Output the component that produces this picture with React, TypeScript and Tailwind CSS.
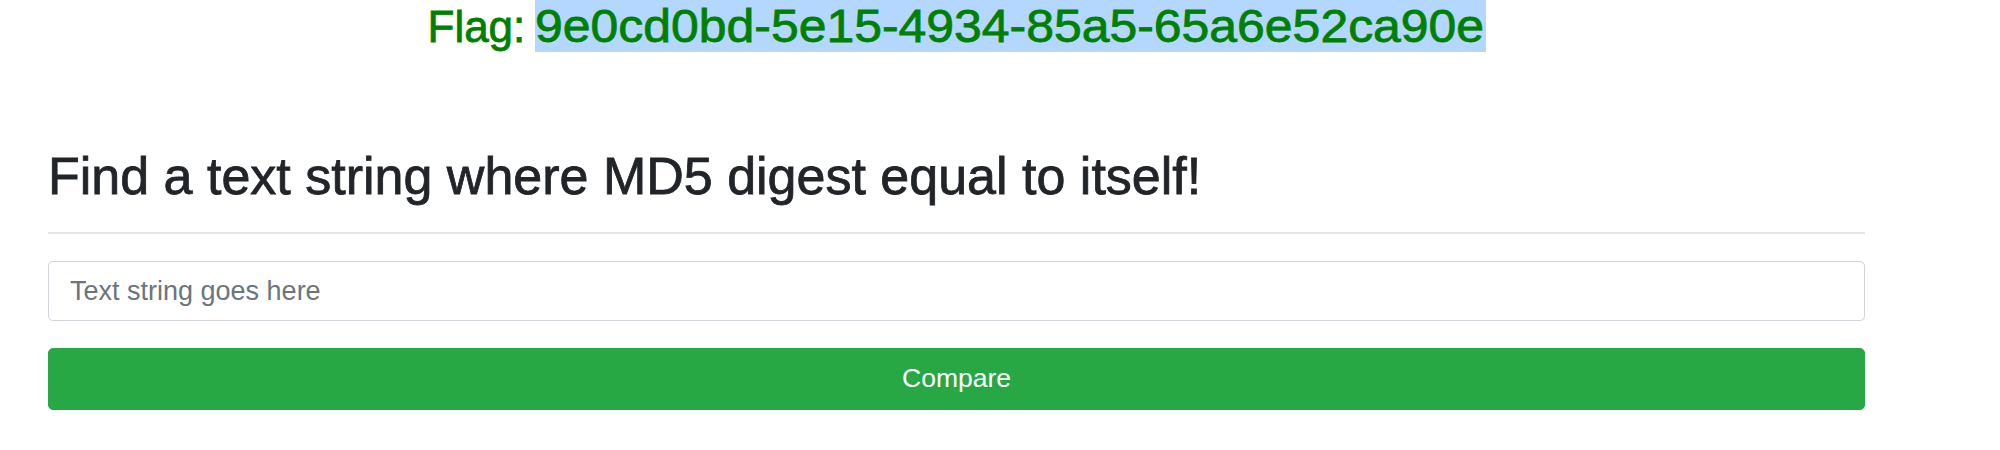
export default function App() {
  const flag = '9e0cd0bd-5e15-4934-85a5-65a6e52ca90e';

  return (
    <div className="min-h-[450px] w-full bg-white font-['Liberation_Sans',Arial,sans-serif]">
      <div className="pl-[48px] pr-[135px]">
        {/* Flag */}
        <h3 className="flex items-baseline justify-center h-[52px] text-[46px] leading-[52px] font-medium text-[#008000] [-webkit-text-stroke:0.8px_#008000]">
          <span className="w-[107px] text-[44px] whitespace-pre">Flag: </span>
          <span className="w-[951px] bg-[#b3d7ff] overflow-hidden">
            <span className="inline-block origin-left scale-x-[1.085]">{flag}</span>
          </span>
        </h3>

        {/* Heading */}
        <h2 className="mt-[93px] text-[52px] leading-[62px] font-medium text-[#212529] [-webkit-text-stroke:0.8px_#212529]">
          Find a text string where MD5 digest equal to itself!
        </h2>
        <hr className="mt-[25px] border-0 border-t-2 border-[#e6e6e6]" />

        {/* Form */}
        <form className="mt-[27px] flex flex-col gap-[27px]" onSubmit={(e) => e.preventDefault()}>
          <input
            type="text"
            placeholder="Text string goes here"
            className="h-[60px] w-full rounded-[5px] border border-[#ced4da] bg-white px-[21px] text-[27px] text-[#495057] outline-none placeholder:text-[#6c757d]"
          />
          <button
            type="submit"
            className="h-[62px] w-full rounded-[5px] border border-[#28a745] bg-[#28a745] text-[26.5px] text-white"
          >
            Compare
          </button>
        </form>
      </div>
    </div>
  );
}
